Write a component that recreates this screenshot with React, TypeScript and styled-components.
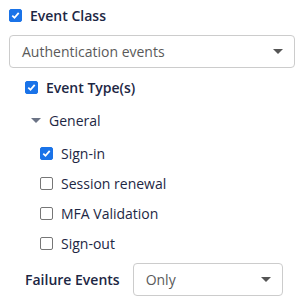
import React, { useState } from 'react';
import styled, { createGlobalStyle } from 'styled-components';

const GlobalStyle = createGlobalStyle`
  body {
    margin: 0;
    background: #ffffff;
    font-family: "Open Sans", "Liberation Sans", sans-serif;
    color: #1d2744;
  }
`;

const Panel = styled('div')`
  width: 304px;
  height: 305px;
  padding: 0 9px;
  box-sizing: border-box;
`;

const Row = styled('label')<{ indent: number; gapTop: number }>`
  display: flex;
  align-items: center;
  height: 30px;
  margin-top: ${({ gapTop }) => gapTop}px;
  padding-left: ${({ indent }) => indent}px;
  font-size: 14px;
  cursor: pointer;
`;

const Title = styled('span')<{ strong?: boolean }>`
  margin-left: 8px;
  font-weight: ${({ strong }) => (strong ? 600 : 400)};
`;

const Box = styled('span')<{ checked: boolean }>`
  width: 13px;
  height: 13px;
  box-sizing: border-box;
  border-radius: 2px;
  display: inline-flex;
  align-items: center;
  justify-content: center;
  flex-shrink: 0;
  background: ${({ checked }) => (checked ? '#1a73e8' : '#ffffff')};
  border: 1px solid ${({ checked }) => (checked ? '#1a73e8' : '#767676')};
`;

const Select = styled('div')<{ width?: number }>`
  display: flex;
  align-items: center;
  justify-content: space-between;
  height: 33px;
  box-sizing: border-box;
  width: ${({ width }) => (width ? `${width}px` : '100%')};
  border: 1px solid #cccccc;
  border-radius: 4px;
  padding: 0 11px 0 12px;
  font-size: 14px;
  color: #5a5a5a;
`;

const Caret = styled('span')<{ color?: string }>`
  width: 0;
  height: 0;
  border-left: 5px solid transparent;
  border-right: 5px solid transparent;
  border-top: 5px solid ${({ color }) => color || '#555555'};
`;

const Group = styled('div')`
  display: flex;
  align-items: center;
  height: 30px;
  margin-top: 3px;
  padding-left: 22px;
  font-size: 14px;
`;

const FailureRow = styled('div')`
  display: flex;
  align-items: center;
  margin-top: 5px;
  padding-left: 16px;
  font-size: 14px;
  gap: 13px;
`;

const Check = ({ checked }: { checked: boolean }) => (
  <Box checked={checked}>
    {checked && (
      <svg width="9" height="9" viewBox="0 0 9 9">
        <path d="M1.3 4.6 L3.5 6.8 L7.7 1.9" fill="none" stroke="#fff" strokeWidth="1.8" />
      </svg>
    )}
  </Box>
);

const EVENTS = [
  { name: 'Sign-in', on: true },
  { name: 'Session renewal', on: false },
  { name: 'MFA Validation', on: false },
  { name: 'Sign-out', on: false },
];

export default () => {
  const [events] = useState(EVENTS);

  return (
    <>
      <GlobalStyle />
      <Panel>
        <Row indent={0} gapTop={0}>
          <Check checked />
          <Title strong>Event Class</Title>
        </Row>
        <div style={{ marginTop: 5 }}>
          <Select>
            <span>Authentication events</span>
            <Caret />
          </Select>
        </div>
        <Row indent={16} gapTop={4}>
          <Check checked />
          <Title strong>Event Type(s)</Title>
        </Row>
        <Group>
          <Caret color="#6b7385" />
          <Title>General</Title>
        </Group>
        {events.map((e, i) => (
          <Row key={e.name} indent={31} gapTop={i === 0 ? 3 : 0}>
            <Check checked={e.on} />
            <Title>{e.name}</Title>
          </Row>
        ))}
        <FailureRow>
          <Title strong style={{ marginLeft: 0 }}>Failure Events</Title>
          <Select width={150}>
            <span>Only</span>
            <Caret />
          </Select>
        </FailureRow>
      </Panel>
    </>
  );
};
